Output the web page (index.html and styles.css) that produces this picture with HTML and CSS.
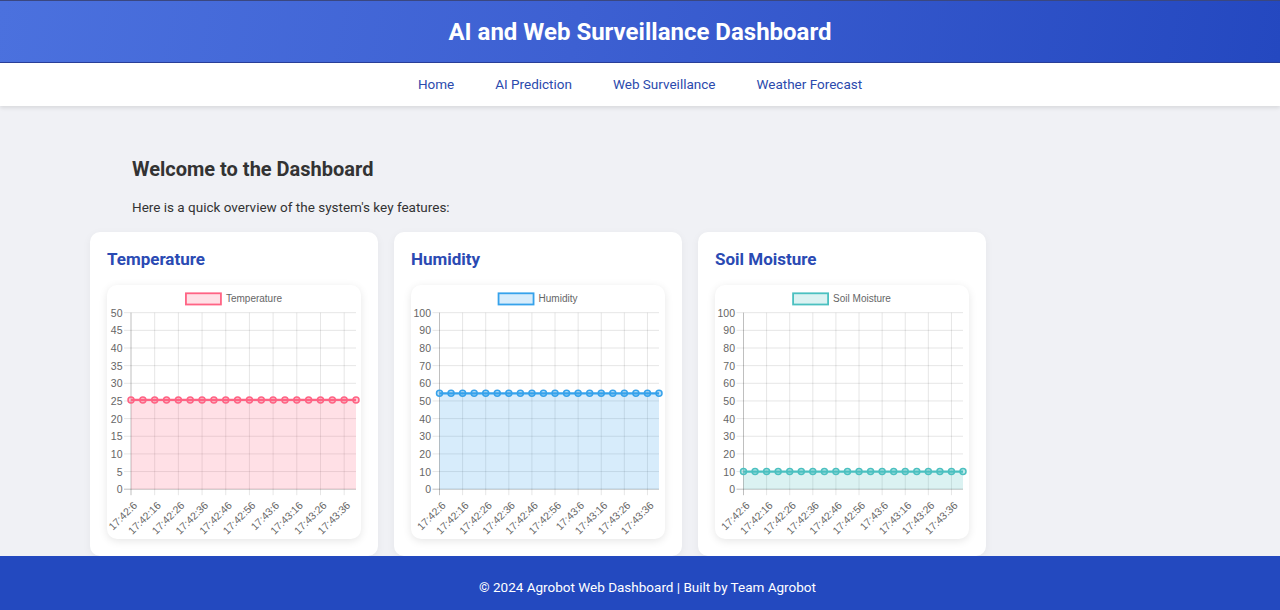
FILE: index.html
```html
<!DOCTYPE html>
<html lang="en">
<head>
<meta charset="utf-8">
<title>AI and Web Surveillance Dashboard</title>
<link rel="stylesheet" href="styles.css">
</head>
<body>
<header class="site-header">
  <h1 class="site-title">AI and Web Surveillance Dashboard</h1>
</header>
<nav class="site-nav">
  <a class="nav-link" href="#">Home</a>
  <a class="nav-link" href="#">AI Prediction</a>
  <a class="nav-link" href="#">Web Surveillance</a>
  <a class="nav-link" href="#">Weather Forecast</a>
</nav>
<main class="main">
  <section class="intro">
    <h2 class="intro-title">Welcome to the Dashboard</h2>
    <p class="intro-text">Here is a quick overview of the system's key features:</p>
  </section>
  <div class="cards">
    <div class="card">
      <h3 class="card-title">Temperature</h3>
      <div class="chart-box"><svg class="chart" id="chart-temp" width="254" height="254" viewBox="0 0 254 254"></svg></div>
    </div>
    <div class="card">
      <h3 class="card-title">Humidity</h3>
      <div class="chart-box"><svg class="chart" id="chart-hum" width="254" height="254" viewBox="0 0 254 254"></svg></div>
    </div>
    <div class="card">
      <h3 class="card-title">Soil Moisture</h3>
      <div class="chart-box"><svg class="chart" id="chart-soil" width="254" height="254" viewBox="0 0 254 254"></svg></div>
    </div>
  </div>
</main>
<footer class="site-footer">© 2024 Agrobot Web Dashboard | Built by Team Agrobot</footer>
<script src="script.js"></script>
</body>
</html>
```

FILE: styles.css
```css
* { box-sizing: border-box; }
html, body { margin: 0; padding: 0; }
body {
  font-family: Roboto, "Liberation Sans", Arial, sans-serif;
  background: #f0f1f5;
  color: #333;
  height: 610px;
  overflow: hidden;
}
.site-header {
  height: 63px;
  background: linear-gradient(100deg, #4b71de 0%, #3d60d2 45%, #2448c0 100%);
  border-top: 1px solid #3a4780;
  border-bottom: 1px solid #2a3f9a;
  display: flex;
  align-items: center;
  justify-content: center;
}
.site-title {
  margin: 0;
  color: #fff;
  font-size: 24px;
  font-weight: 700;
  line-height: 30px;
  padding-top: 1px;
}
.site-nav {
  height: 43px;
  padding-bottom: 1px;
  background: #fff;
  box-shadow: 0 2px 4px rgba(0, 0, 0, 0.1);
  display: flex;
  align-items: center;
  justify-content: center;
  gap: 41px;
  position: relative;
  z-index: 1;
}
.nav-link {
  color: #2b4aad;
  text-decoration: none;
  font-size: 13.5px;
  line-height: 20px;
}
.main {
  padding: 51px 0 0 90px;
}
.intro {
  padding-left: 42px;
}
.intro-title {
  margin: 0;
  font-size: 20px;
  line-height: 24px;
  font-weight: 700;
  color: #333;
}
.intro-text {
  margin: 16px 0 15px;
  font-size: 13.5px;
  line-height: 20px;
  color: #333;
}
.cards {
  display: flex;
  gap: 16px;
}
.card {
  width: 288px;
  background: #fff;
  border-radius: 10px;
  padding: 17px;
  box-shadow: 0 2px 8px rgba(0, 0, 0, 0.05);
}
.card-title {
  margin: 0 0 16px;
  font-size: 17px;
  line-height: 21px;
  font-weight: 700;
  color: #2a4ab3;
}
.chart-box {
  width: 254px;
  height: 254px;
  margin-top: -1px;
  background: #fff;
  border-radius: 10px;
  box-shadow: 0 2px 8px rgba(0, 0, 0, 0.1);
}
.chart {
  display: block;
  font-family: "Liberation Sans", Arial, sans-serif;
}
.site-footer {
  position: fixed;
  left: 0;
  right: 0;
  bottom: 0;
  height: 54px;
  padding: 7px 0 0 15px;
  background: #2349bf;
  color: #fff;
  font-size: 13.5px;
  display: flex;
  align-items: center;
  justify-content: center;
}
```

FILE: script.js
```js
(function () {
  var NS = 'http://www.w3.org/2000/svg';
  function el(tag, attrs, parent) {
    var e = document.createElementNS(NS, tag);
    for (var k in attrs) e.setAttribute(k, attrs[k]);
    parent.appendChild(e);
    return e;
  }
  var times = [];
  for (var i = 0; i < 20; i++) {
    var t = 42 * 60 + 6 + 5 * i;
    times.push('17:' + Math.floor(t / 60) + ':' + (t % 60));
  }
  var charts = [
    { id: 'chart-temp', label: 'Temperature', c: '255,99,132', max: 50, step: 5, value: 25.3, x0: 24, x1: 249 },
    { id: 'chart-hum', label: 'Humidity', c: '54,162,235', max: 100, step: 10, value: 54.3, x0: 28.5, x1: 248 },
    { id: 'chart-soil', label: 'Soil Moisture', c: '75,192,192', max: 100, step: 10, value: 10, x0: 28.5, x1: 248 }
  ];
  charts.forEach(function (cfg) {
    var svg = document.getElementById(cfg.id);
    var top = 27.7, bottom = 204.2;
    var x0 = cfg.x0, x1 = cfg.x1;
    var dx = (x1 - x0) / 19;
    var n = cfg.max / cfg.step;

    // legend
    var lt = el('text', { y: 13.8, 'font-size': 10, fill: '#666', 'dominant-baseline': 'central' }, svg);
    lt.textContent = cfg.label;
    var tw = lt.getComputedTextLength();
    var lx = (254 - (35 + 5 + tw)) / 2;
    el('rect', { x: lx, y: 8.3, width: 35, height: 11.2, fill: 'rgba(' + cfg.c + ',0.2)', stroke: 'rgb(' + cfg.c + ')', 'stroke-width': 1.8 }, svg);
    lt.setAttribute('x', lx + 40);

    // horizontal grid + y labels
    for (var k = 0; k <= n; k++) {
      var y = bottom - k * (bottom - top) / n;
      el('line', { x1: x0 - 7, x2: x1, y1: y, y2: y, stroke: k === 0 ? 'rgba(0,0,0,0.25)' : 'rgba(0,0,0,0.1)', 'stroke-width': 1 }, svg);
      var yt = el('text', { x: x0 - 8.5, y: y, 'font-size': 10.5, fill: '#666', 'text-anchor': 'end', 'dominant-baseline': 'central' }, svg);
      yt.textContent = String(k * cfg.step);
    }
    // vertical grid + x labels
    for (var j = 0; j < 20; j += 2) {
      var x = x0 + j * dx;
      el('line', { x1: x, x2: x, y1: top, y2: bottom + 6, stroke: j === 0 ? 'rgba(0,0,0,0.25)' : 'rgba(0,0,0,0.1)', 'stroke-width': 1 }, svg);
      var xt = el('text', { transform: 'translate(' + (x + 4) + ',' + (bottom + 14) + ') rotate(-45)', 'font-size': 10.5, fill: '#666', 'text-anchor': 'end', 'dominant-baseline': 'central' }, svg);
      xt.textContent = times[j];
    }
    // data
    var vy = bottom - (cfg.value / cfg.max) * (bottom - top);
    el('polygon', { points: x0 + ',' + bottom + ' ' + x0 + ',' + vy + ' ' + x1 + ',' + vy + ' ' + x1 + ',' + bottom, fill: 'rgba(' + cfg.c + ',0.2)' }, svg);
    el('line', { x1: x0, x2: x1, y1: vy, y2: vy, stroke: 'rgb(' + cfg.c + ')', 'stroke-width': 2.2 }, svg);
    for (var p = 0; p < 20; p++) {
      el('circle', { cx: x0 + p * dx, cy: vy, r: 3, fill: 'rgba(' + cfg.c + ',0.35)', stroke: 'rgb(' + cfg.c + ')', 'stroke-width': 1.5 }, svg);
    }
  });
})();
```
